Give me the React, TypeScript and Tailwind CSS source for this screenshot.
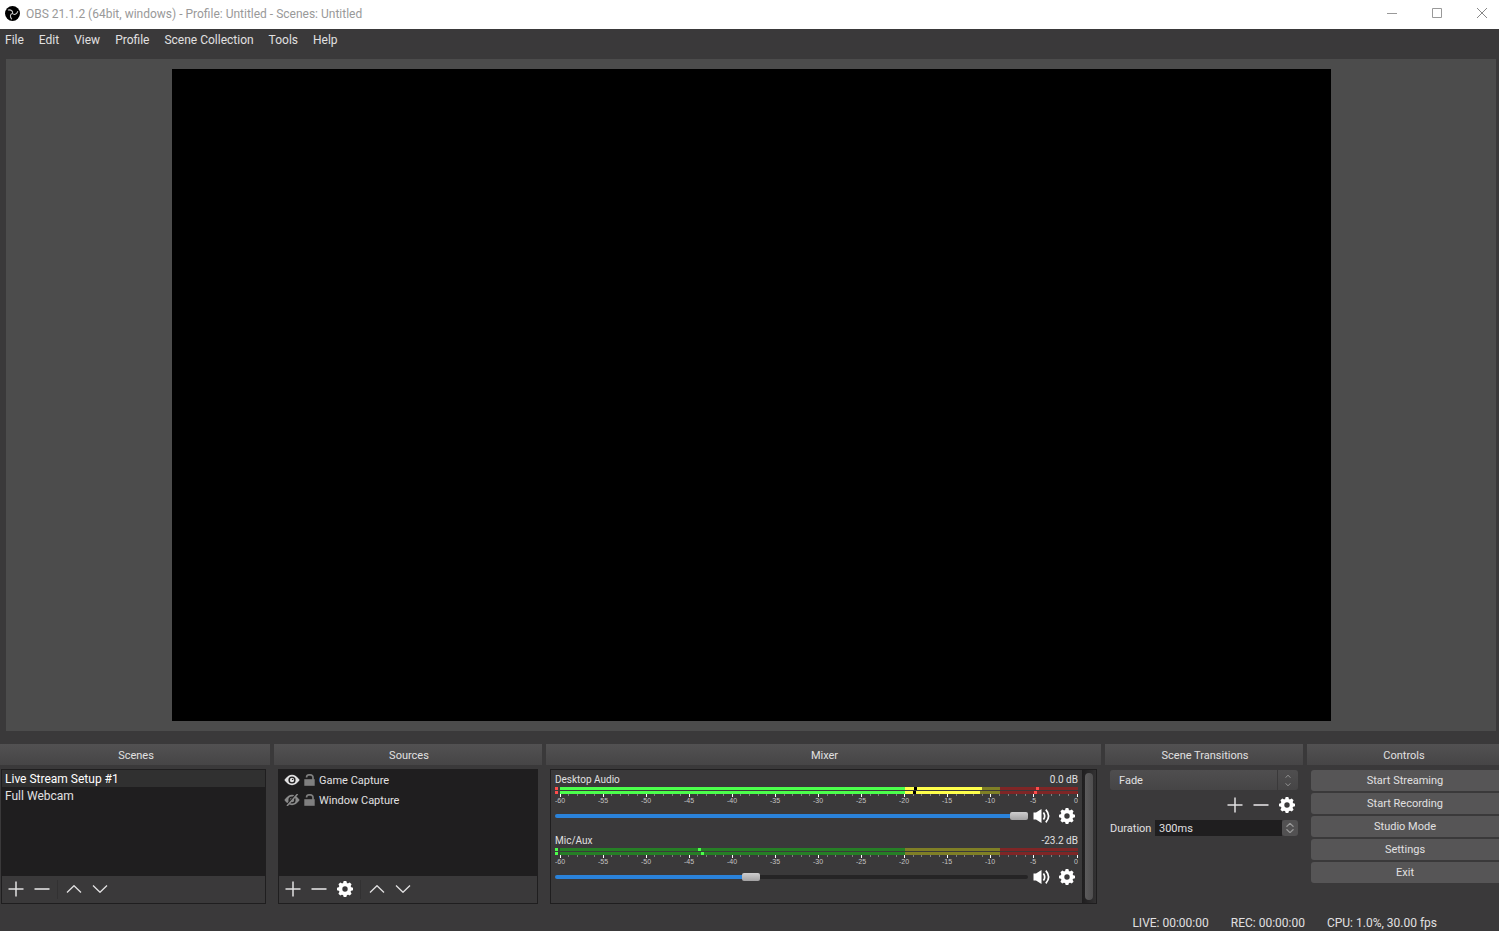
import React, { useState } from 'react';

const MENU = ['File', 'Edit', 'View', 'Profile', 'Scene Collection', 'Tools', 'Help'];
const SCENES = ['Live Stream Setup #1', 'Full Webcam'];
const SOURCES = [
  { name: 'Game Capture', visible: true },
  { name: 'Window Capture', visible: false },
];
const CONTROLS = ['Start Streaming', 'Start Recording', 'Studio Mode', 'Settings', 'Exit'];

type Mark = { x: number; color: string };
type Channel = {
  name: string;
  db: string;
  volume: number;
  input: string;
  levels: { green: number; yellow: number; marks: Mark[] }[];
};

const CHANNELS: Channel[] = [
  {
    name: 'Desktop Audio',
    db: '0.0 dB',
    volume: 100,
    input: '#ff4c4c',
    levels: [
      { green: 345, yellow: 77, marks: [{ x: 359, color: '#000' }, { x: 481, color: '#ff4c4c' }] },
      { green: 345, yellow: 75, marks: [{ x: 358, color: '#000' }, { x: 479, color: '#ff4c4c' }] },
    ],
  },
  {
    name: 'Mic/Aux',
    db: '-23.2 dB',
    volume: 41,
    input: '#4cff4c',
    levels: [
      { green: 0, yellow: 0, marks: [{ x: 143, color: '#4cff4c' }] },
      { green: 0, yellow: 0, marks: [{ x: 146, color: '#4cff4c' }] },
    ],
  },
];

const ObsLogo = () => (
  <svg width="15" height="15" viewBox="0 0 30 30" fill="none">
    <circle cx="15" cy="15" r="15" fill="#000" />
    {[0, 120, 240].map((a) => (
      <path
        key={a}
        d="M15 15C16.5 10.5 12.5 7 6.5 8"
        stroke="#c8c8c8"
        strokeWidth="2.2"
        strokeLinecap="round"
        transform={`rotate(${a} 15 15)`}
      />
    ))}
  </svg>
);

const PlusIcon = () => (
  <svg width="16" height="16" viewBox="0 0 16 16" stroke="#e1e0e1" strokeWidth="1.5">
    <path d="M8 0.5V15.5M0.5 8H15.5" />
  </svg>
);

const MinusIcon = () => (
  <svg width="16" height="16" viewBox="0 0 16 16" stroke="#e1e0e1" strokeWidth="1.6">
    <path d="M0.5 8H15.5" />
  </svg>
);

const ChevronIcon = ({ down = false, size = 16, color = '#e1e0e1' }: { down?: boolean; size?: number; color?: string }) => (
  <svg width={size} height={size / 2} viewBox="0 0 16 8" fill="none" stroke={color} strokeWidth={size < 10 ? 2.4 : 1.3}>
    <path d={down ? 'M1 0.5L8 7.3L15 0.5' : 'M1 7.5L8 0.7L15 7.5'} />
  </svg>
);

const GearIcon = () => (
  <svg width="16" height="16" viewBox="0 0 16 16">
    <circle cx="8" cy="8" r="4.5" fill="none" stroke="#fff" strokeWidth="3.6" />
    {[0, 45, 90, 135, 180, 225, 270, 315].map((a) => (
      <path key={a} d="M5.9 2.6L6.7 0H9.3L10.1 2.6Z" fill="#fff" transform={`rotate(${a} 8 8)`} />
    ))}
  </svg>
);

const SpeakerIcon = () => (
  <svg width="17" height="16" viewBox="0 0 17 16" fill="none" stroke="#fff">
    <path d="M0.5 4.5H3L8.5 1V15L3 11.5H0.5Z" fill="#fff" stroke="none" />
    <path d="M10.4 4.4Q13 8 10.4 11.6" strokeWidth="1.7" />
    <path d="M12.8 1.6Q18.4 8 12.8 14.4" strokeWidth="1.7" />
  </svg>
);

const EyeIcon = ({ visible }: { visible: boolean }) => (
  <svg width="16" height="12" viewBox="0 0 16 12">
    <path d="M0.3 6Q8 -4.4 15.7 6Q8 16.4 0.3 6Z" fill={visible ? '#e1e0e1' : '#8a8a8a'} />
    <circle cx="8" cy="6" r="3.6" fill="#1f1e1f" />
    <circle cx="8" cy="6" r="2.2" fill={visible ? '#e1e0e1' : '#8a8a8a'} />
    {visible ? (
      <circle cx="8.6" cy="5.4" r="0.7" fill="#1f1e1f" />
    ) : (
      <>
        <path d="M1.8 12L12.2 0" stroke="#1f1e1f" strokeWidth="1.6" />
        <path d="M3 12L13.6 0" stroke="#8a8a8a" strokeWidth="1.5" />
      </>
    )}
  </svg>
);

const LockIcon = () => (
  <svg width="11" height="12" viewBox="0 0 11 12">
    <path d="M2.6 3.4V3A2.4 2.2 0 0 1 5 0.9H6.4A2.6 2.6 0 0 1 9 3.5V6" fill="none" stroke="#7f7f7f" strokeWidth="1.7" />
    <rect x="0.3" y="5.2" width="10.4" height="6.6" fill="#7f7f7f" />
  </svg>
);

const ToolButton = ({ label, children }: { label: string; children: React.ReactNode }) => (
  <button aria-label={label} className="flex h-6 w-[26px] items-center justify-center">
    {children}
  </button>
);

const Toolbar = ({ gear = false }: { gear?: boolean }) => (
  <div className="flex h-[27px] items-start bg-[#3a393a] pt-px pl-px">
    <ToolButton label="Add"><PlusIcon /></ToolButton>
    <ToolButton label="Remove"><MinusIcon /></ToolButton>
    {gear && <ToolButton label="Properties"><GearIcon /></ToolButton>}
    <span className="mt-[3px] mr-[3px] ml-0.5 h-[19px] w-px bg-[#323132]" />
    <ToolButton label="Move up"><ChevronIcon /></ToolButton>
    <ToolButton label="Move down"><ChevronIcon down /></ToolButton>
  </div>
);

const Dock = ({ title, className = '', children }: { title: string; className?: string; children: React.ReactNode }) => (
  <section className="flex min-w-0 flex-col gap-1">
    <h2 className="h-[21px] bg-linear-to-b from-[#525152] to-[#464546] pl-0.5 text-center leading-[23px]">{title}</h2>
    <div className={`h-[135px] ${className}`}>{children}</div>
  </section>
);

// 60 dB over 517px, the first 5px are taken by the input peak squares
const tickX = (i: number) => Math.floor(5 + (i * 517) / 60) + 0.5;

const Meter = ({ channel }: { channel: Channel }) => (
  <svg viewBox="0 0 523 18" className="block w-full">
    {channel.levels.map((level, i) => (
      <g key={i} transform={`translate(0 ${i * 4})`} shapeRendering="crispEdges">
        <rect width="3" height="3" fill={channel.input} />
        <rect x="5" width="345" height="3" fill="#267f26" />
        <rect x="350" width="95" height="3" fill="#7f7f26" />
        <rect x="445" width="78" height="3" fill="#7f2626" />
        <rect x="5" width={level.green} height="3" fill="#4cff4c" />
        <rect x="350" width={level.yellow} height="3" fill="#ffff4c" />
        {level.marks.map((m) => (
          <rect key={m.x} x={m.x} width="3" height="3" fill={m.color} />
        ))}
      </g>
    ))}
    {Array.from({ length: 61 }, (_, i) => (
      <path
        key={i}
        d={`M${tickX(i)} 7V${i % 5 ? 9 : 10}`}
        stroke={i % 5 ? '#7f7f7f' : '#fff'}
        shapeRendering="crispEdges"
      />
    ))}
    {Array.from({ length: 13 }, (_, i) => (
      <text
        key={i}
        x={i === 12 ? 521 : tickX(i * 5) - 0.5}
        y="16"
        textAnchor="middle"
        fill="#c4c4c4"
        className="font-['Liberation_Sans'] text-[7px]"
      >
        {i * 5 - 60}
      </text>
    ))}
  </svg>
);

const MixerChannel = ({ channel }: { channel: Channel }) => {
  const [volume, setVolume] = useState(channel.volume);
  return (
    <div className="h-[61px] pl-1">
      <div className="flex h-[17px] justify-between pr-1 text-[10px] leading-[19px]">
        <span>{channel.name}</span>
        <span>{channel.db}</span>
      </div>
      <div className="pr-1">
        <Meter channel={channel} />
      </div>
      <div className="flex h-[22px] items-center pr-0.5">
        <input
          type="range"
          aria-label={`${channel.name} volume`}
          value={volume}
          onChange={(e) => setVolume(Number(e.target.value))}
          style={{ '--fill': `${volume}%` } as React.CSSProperties}
          className="h-2 min-w-0 flex-1 appearance-none bg-transparent [&::-webkit-slider-runnable-track]:h-1 [&::-webkit-slider-runnable-track]:rounded-sm [&::-webkit-slider-runnable-track]:bg-[linear-gradient(to_right,#2a82da_var(--fill),#252425_var(--fill))] [&::-webkit-slider-thumb]:-mt-0.5 [&::-webkit-slider-thumb]:h-2 [&::-webkit-slider-thumb]:w-[18px] [&::-webkit-slider-thumb]:appearance-none [&::-webkit-slider-thumb]:rounded-xs [&::-webkit-slider-thumb]:bg-linear-to-b [&::-webkit-slider-thumb]:from-[#cfcecf] [&::-webkit-slider-thumb]:to-[#a3a2a3]"
        />
        <ToolButton label={`Mute ${channel.name}`}><SpeakerIcon /></ToolButton>
        <ToolButton label={`${channel.name} settings`}><GearIcon /></ToolButton>
      </div>
    </div>
  );
};

export default function App() {
  const [scene, setScene] = useState(SCENES[0]);
  const [duration, setDuration] = useState('300ms');

  return (
    <div className="flex h-screen flex-col bg-[#3a393a] font-[Roboto,sans-serif] text-[11px] text-[#e1e0e1]">
      {/* Title bar */}
      <header className="flex h-[29px] items-start justify-between bg-white pl-[5px] text-xs text-[#999]">
        <div className="flex h-[27px] items-center gap-1.5">
          <ObsLogo />
          <h1>OBS 21.1.2 (64bit, windows) - Profile: Untitled - Scenes: Untitled</h1>
        </div>
        <div className="flex">
          <button aria-label="Minimize" className="flex h-[26px] w-[45px] items-center justify-center">
            <svg width="10" height="10" viewBox="0 0 10 10" stroke="#999"><path d="M0 5.5H10" /></svg>
          </button>
          <button aria-label="Maximize" className="flex h-[26px] w-[45px] items-center justify-center">
            <svg width="10" height="10" viewBox="0 0 10 10" fill="none" stroke="#999"><path d="M0.5 0.5H9.5V9.5H0.5Z" /></svg>
          </button>
          <button aria-label="Close" className="mr-[-5px] flex h-[26px] w-[45px] items-center justify-center">
            <svg width="10" height="10" viewBox="0 0 10 10" stroke="#888"><path d="M0 0L10 10M10 0L0 10" /></svg>
          </button>
        </div>
      </header>

      <nav className="flex h-[30px] shrink-0 gap-[15px] pl-[5px] text-xs leading-[22px]">
        {MENU.map((item) => (
          <button key={item} className="h-[22px]">{item}</button>
        ))}
      </nav>

      {/* Preview */}
      <main className="mr-[3px] mb-[13px] ml-1.5 flex min-h-0 flex-1 justify-center bg-[#4c4c4c] py-2.5 pl-px">
        <div className="aspect-video h-full bg-black" />
      </main>

      <div className="grid shrink-0 grid-cols-[270fr_268fr_555fr_198fr_192fr] gap-1">
        <Dock title="Scenes" className="pr-1 pl-px">
          <div className="flex h-full flex-col border border-[#1f1e1f] bg-[#1f1e1f]">
            <ul className="flex-1 text-xs">
              {SCENES.map((s) => (
                <li key={s}>
                  <button
                    onClick={() => setScene(s)}
                    className={`block h-[17px] w-full pl-[3px] text-left leading-[19px] ${s === scene ? 'bg-[#303030] text-white' : ''}`}
                  >
                    {s}
                  </button>
                </li>
              ))}
            </ul>
            <Toolbar />
          </div>
        </Dock>

        <Dock title="Sources" className="px-1">
          <div className="flex h-full flex-col border border-[#1f1e1f] bg-[#1f1e1f]">
            <ul className="flex-1">
              {SOURCES.map((s) => (
                <li key={s.name} className="flex h-5 items-center pl-[5px]">
                  <button aria-label={`Toggle ${s.name}`} className="mr-1"><EyeIcon visible={s.visible} /></button>
                  <button aria-label={`Lock ${s.name}`} className="mr-1"><LockIcon /></button>
                  <span className="pt-[3px]">{s.name}</span>
                </li>
              ))}
            </ul>
            <Toolbar gear />
          </div>
        </Dock>

        <Dock title="Mixer" className="px-1">
          <div className="flex h-full border border-[#1f1e1f]">
            <div className="min-w-0 flex-1">
              {CHANNELS.map((c) => (
                <MixerChannel key={c.name} channel={c} />
              ))}
            </div>
            <div className="w-3.5 bg-linear-to-r from-[#1f1e1f] to-[#333233] py-[3px] pl-[3px]">
              <div className="h-full w-2 rounded-full bg-linear-to-r from-[#5c5b5c] to-[#504f50]" />
            </div>
          </div>
        </Dock>

        <Dock title="Scene Transitions" className="px-[5px] pt-px">
          <div className="relative">
            <select
              aria-label="Transition"
              className="block h-5 w-full appearance-none rounded-[3px] bg-linear-to-b from-[#4f4e4f] to-[#464546] pt-0.5 pl-[9px]"
            >
              <option>Fade</option>
            </select>
            <span className="pointer-events-none absolute inset-y-0 right-0 flex w-[21px] flex-col items-center justify-center gap-[5px] border-l border-[#3a393a]">
              <ChevronIcon size={6} color="#999" />
              <ChevronIcon size={6} color="#999" down />
            </span>
          </div>
          <div className="flex h-[30px] items-center justify-end">
            <ToolButton label="Add transition"><PlusIcon /></ToolButton>
            <ToolButton label="Remove transition"><MinusIcon /></ToolButton>
            <div className="-mr-0.5"><ToolButton label="Transition properties"><GearIcon /></ToolButton></div>
          </div>
          <div className="flex h-4 items-center">
            <label htmlFor="duration" className="w-[45px] shrink-0 pt-0.5 whitespace-nowrap">Duration</label>
            <input
              id="duration"
              value={duration}
              onChange={(e) => setDuration(e.target.value)}
              className="h-4 min-w-0 flex-1 bg-[#1f1e1f] pt-0.5 pl-1 outline-none"
            />
            <div className="flex h-4 w-4 flex-col items-center justify-center gap-0.5 rounded-[3px] bg-[#525152]">
              <button aria-label="Increase duration"><ChevronIcon size={8} color="#999" /></button>
              <button aria-label="Decrease duration"><ChevronIcon size={8} color="#999" down /></button>
            </div>
          </div>
        </Dock>

        <Dock title="Controls" className="flex flex-col gap-0.5 pt-px pl-1">
          {CONTROLS.map((label) => (
            <button key={label} className="h-[21px] rounded-l-[3px] bg-[#565556] pt-px">{label}</button>
          ))}
        </Dock>
      </div>

      {/* Status bar */}
      <footer className="flex h-[27px] shrink-0 items-center justify-end gap-[22px] pt-2.5 pr-[62px] text-xs">
        <span>LIVE: 00:00:00</span>
        <span>REC: 00:00:00</span>
        <span>CPU: 1.0%, 30.00 fps</span>
      </footer>
    </div>
  );
}
